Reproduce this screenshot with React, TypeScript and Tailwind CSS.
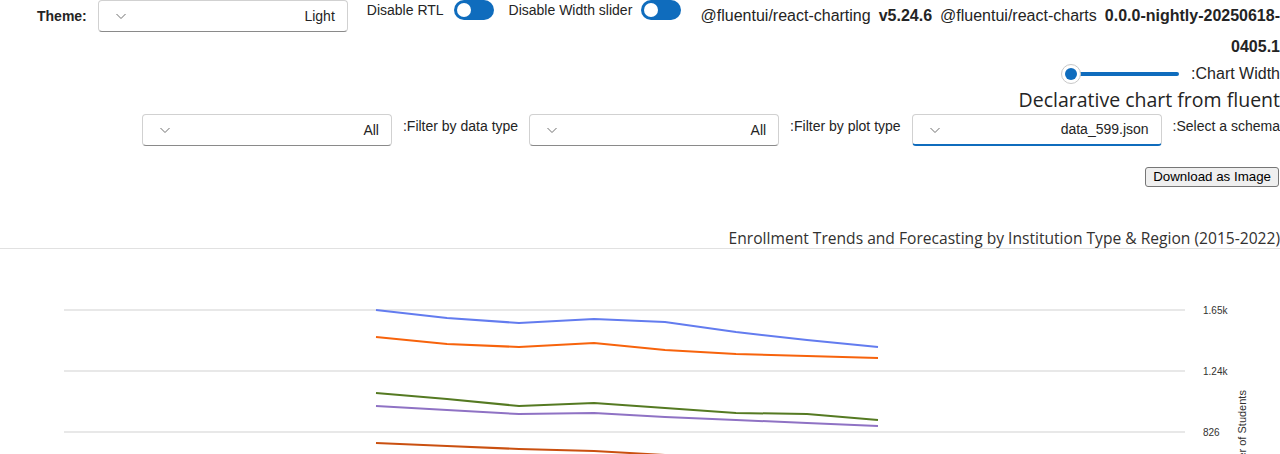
import React from "react"

const font = "font-['Segoe_UI','Liberation_Sans',sans-serif]"
const openSans = "font-['Open_Sans','Segoe_UI',sans-serif]"

function Chevron() {
  return (
    <svg width="12" height="12" viewBox="0 0 12 12">
      <path d="M1.5 4 L6 8.5 L10.5 4" fill="none" stroke="#707070" strokeWidth="1" />
    </svg>
  )
}

function Dropdown({ value, focused }: { value: string; focused?: boolean }) {
  return (
    <div
      className={
        focused
          ? "flex h-[32px] w-[250px] shrink-0 items-center justify-between rounded-[4px] border border-[#d1d1d1] border-b-2 border-b-[#0f6cbd] bg-white pl-[16px] pr-[12px]"
          : "flex h-[32px] w-[250px] shrink-0 items-center justify-between rounded-[4px] border border-[#d1d1d1] border-b-[#8a8a8a] bg-white pl-[16px] pr-[12px]"
      }
    >
      <Chevron />
      <span className="text-[14px] text-[#242424]">{value}</span>
    </div>
  )
}

function Toggle() {
  return (
    <div className="flex h-[20px] w-[40px] shrink-0 items-center rounded-full bg-[#0f6cbd] px-[3px]">
      <div className="h-[14px] w-[14px] rounded-full bg-white" />
    </div>
  )
}

type Series = { color: string; pts: [number, number][] }

const series: Series[] = [
  { color: "#637cef", pts: [[376, 61], [447, 69], [519, 74], [594, 70], [665, 73], [736, 83], [807, 91], [878, 98]] },
  { color: "#f7630c", pts: [[376, 88], [447, 95], [519, 98], [594, 94], [665, 101], [736, 105], [807, 107], [878, 109]] },
  { color: "#557a22", pts: [[376, 144], [447, 150], [519, 157], [594, 154], [665, 159], [736, 164], [807, 165], [878, 171]] },
  { color: "#8f72c4", pts: [[376, 157], [447, 161], [519, 165], [594, 164], [665, 168], [736, 171], [807, 174], [878, 177]] },
  { color: "#ca5010", pts: [[376, 194], [447, 197], [519, 200], [594, 202], [665, 206], [736, 211], [807, 215], [878, 219]] },
]

const ticks = [
  { y: 61, label: "1.65k" },
  { y: 122, label: "1.24k" },
  { y: 183, label: "826" },
]

export default function App() {
  return (
    <div className={`${font} w-[1280px] h-[454px] overflow-hidden bg-white text-[#242424]`}>
      {/* Top bar */}
      <div className="flex items-start">
        <div className="flex h-[32px] items-center gap-[11px] pl-[37px]">
          <span className="text-[14px] font-bold">Theme:</span>
          <Dropdown value="Light" />
        </div>
        <div className="ml-[19px] flex h-[20px] items-center gap-[10px]">
          <span className="text-[14px]">Disable RTL</span>
          <Toggle />
        </div>
        <div className="ml-[15px] flex h-[20px] items-center gap-[9px]">
          <span className="text-[14px]">Disable Width slider</span>
          <Toggle />
        </div>
        <div className="flex-1 pl-[12px] text-[16px] leading-[31px]">
          <div className="flex justify-end gap-[8px] whitespace-nowrap">
            <span>@fluentui/react-charting</span>
            <span className="font-bold">v5.24.6</span>
            <span>@fluentui/react-charts</span>
            <span className="font-bold">0.0.0-nightly-20250618-</span>
          </div>
          <div className="text-right font-bold">0405.1</div>
        </div>
      </div>

      {/* Width slider */}
      <div className="flex h-[24px] items-center justify-end gap-[12px]">
        <div className="relative flex h-[20px] w-[118px] items-center">
          <div className="ml-[8px] h-[4px] flex-1 rounded-full bg-[#0f6cbd]" />
          <div className="absolute left-0 top-0 flex h-[20px] w-[20px] items-center justify-center rounded-full border border-[#c8c8c8] bg-white">
            <div className="h-[12px] w-[12px] rounded-full bg-[#0f6cbd]" />
          </div>
        </div>
        <span className="text-[16px]">:Chart Width</span>
      </div>

      {/* Heading */}
      <div className={`${openSans} text-right text-[19.5px] leading-[28px] text-[#242424]`}>
        Declarative chart from fluent
      </div>

      {/* Filters */}
      <div className="flex items-start justify-end gap-[11px]">
        <Dropdown value="All" />
        <span className="pt-[2px] text-[14px] leading-[20px]">:Filter by data type</span>
        <Dropdown value="All" />
        <span className="pt-[2px] text-[14px] leading-[20px]">:Filter by plot type</span>
        <Dropdown value="data_599.json" focused />
        <span className="pt-[2px] text-[14px] leading-[20px]">:Select a schema</span>
      </div>

      {/* Download */}
      <div className="mt-[21px] flex justify-end pr-[1px]">
        <button className="h-[20px] rounded-[3px] border border-[#767676] bg-[#efefef] px-[7px] text-[13.33px] leading-[18px] text-black">
          Download as Image
        </button>
      </div>

      {/* Chart title */}
      <div className={`${openSans} mt-[41px] border-b border-[#e1e1e1] text-right text-[15.6px] leading-[20px] text-[#323130]`}>
        Enrollment Trends and Forecasting by Institution Type &amp; Region (2015-2022)
      </div>

      {/* Chart */}
      <svg width="1280" height="260" className="block">
        {ticks.map((t) => (
          <g key={t.label}>
            <line x1="64" x2="1185" y1={t.y} y2={t.y} stroke="#e1e1e1" strokeWidth="1.5" />
            <text x="1203" y={t.y + 3.5} fontSize="10" fill="#323130">
              {t.label}
            </text>
          </g>
        ))}
        {series.map((s) => (
          <polyline
            key={s.color}
            points={s.pts.map((p) => p.join(",")).join(" ")}
            fill="none"
            stroke={s.color}
            strokeWidth="2"
          />
        ))}
        <text
          x="0"
          y="0"
          fontSize="11"
          fill="#323130"
          textAnchor="middle"
          transform="translate(1246 190) rotate(-90)"
        >
          Number of Students
        </text>
      </svg>
    </div>
  )
}
